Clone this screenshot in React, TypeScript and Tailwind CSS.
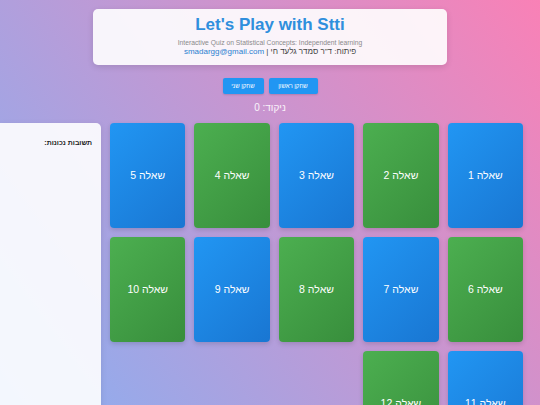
import React from "react";

const font = { fontFamily: '"Liberation Sans", Arial, "DejaVu Sans", sans-serif' };

export default function App() {
  const cards = Array.from({ length: 12 }, (_, i) => i + 1);
  return (
    <div
      className="h-screen w-full overflow-hidden bg-[linear-gradient(54deg,#88b0f2,#f981b6)] font-['Liberation_Sans',Arial,sans-serif]"
      style={font}
    >
      <div className="flex flex-col items-center pt-[9px]">
        <div className="w-[354px] h-[56px] rounded-[5px] bg-white/90 shadow-[0_2px_6px_rgba(0,0,0,0.12)] flex flex-col items-center pt-[6px]">
          <div className="text-[17px] leading-[20px] font-bold text-[#2f8fdd]">Let's Play with Stti</div>
          <div className="mt-[4px] text-[6.75px] leading-[8px] text-[#8a8a8a]">
            Interactive Quiz on Statistical Concepts: Independent learning
          </div>
          <div dir="rtl" className="text-[8px] leading-[10px] text-[#444]">
            פיתוח: ד"ר סמדר גלעד חי | <span className="text-[#2b7fd0]">smadargg@gmail.com</span>
          </div>
        </div>
        <div dir="rtl" className="mt-[13px] flex gap-[5px]">
          <button className="h-[16px] w-[49px] rounded-[2px] bg-[#2196f3] text-white text-[6px] leading-[16px] shadow-[0_1px_2px_rgba(0,0,0,0.15)]">
            שחקן ראשון
          </button>
          <button className="h-[16px] w-[41px] rounded-[2px] bg-[#2196f3] text-white text-[6px] leading-[16px] shadow-[0_1px_2px_rgba(0,0,0,0.15)]">
            שחקן שני
          </button>
        </div>
        <div dir="rtl" className="mt-[7px] text-[10px] leading-[14px] text-white/90">
          ניקוד: 0
        </div>
      </div>
      <div className="mt-[8px] flex items-start">
        <div className="w-[101px] h-[300px] rounded-tr-[5px] bg-white/90 shadow-[0_2px_6px_rgba(0,0,0,0.1)] pt-[15px] pr-[9px]" dir="rtl">
          <div className="text-[7px] leading-[10px] font-bold text-[#222]">תשובות נכונות:</div>
        </div>
        <div dir="rtl" className="ml-[9px] w-[413px] grid grid-cols-5 gap-x-[9px] gap-y-[9px]">
          {cards.map((n) => (
            <div
              key={n}
              className={
                "h-[105px] rounded-[4px] flex items-center justify-center text-white text-[10.5px] shadow-[0_2px_5px_rgba(0,0,0,0.15)] " +
                (n % 2 === 1
                  ? "bg-[linear-gradient(135deg,#2196f3,#1976d2)]"
                  : "bg-[linear-gradient(135deg,#4caf50,#388e3c)]")
              }
            >
              שאלה {n}
            </div>
          ))}
        </div>
      </div>
    </div>
  );
}
